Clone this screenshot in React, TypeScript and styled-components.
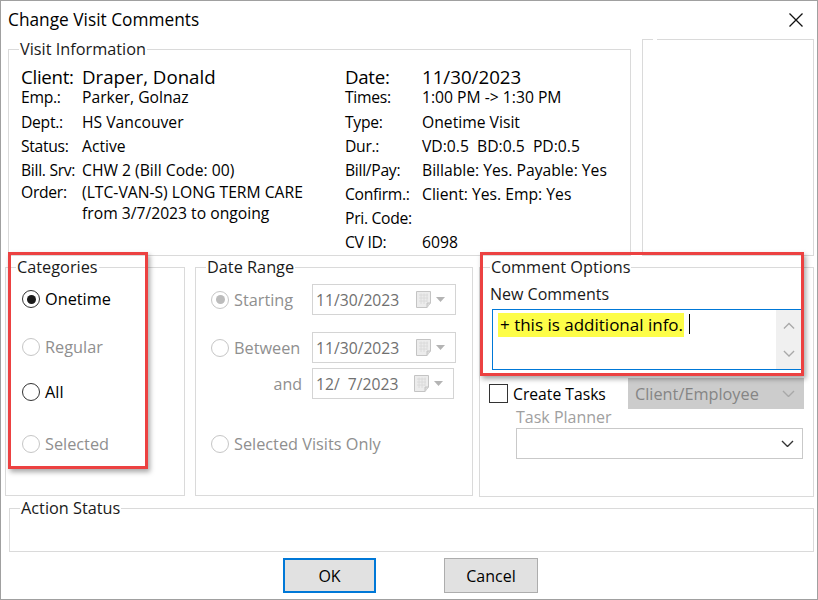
import styled, { createGlobalStyle } from "styled-components";

const GlobalStyle = createGlobalStyle`
  html, body { margin: 0; padding: 0; background: #fff; }
  body { font-family: "Open Sans", "Noto Sans", Arial, sans-serif; color: #000; }
  * { box-sizing: border-box; }
`;

const Window = styled.div`
  position: relative;
  width: 818px;
  height: 600px;
  border: 1px solid #a0a0a0;
  background: #fff;
  display: flex;
  flex-direction: column;
  font-size: 15.7px;
  overflow: hidden;
`;

const TitleBar = styled.div`
  flex: none;
  height: 37px;
  display: flex;
  align-items: center;
  justify-content: space-between;
  padding: 0 14px 0 7px;
`;

const Title = styled.div`
  font-size: 17.3px;
  color: #000;
`;

const Row = styled.div<{ $inset: number; $top: number; $height: number; $gap?: number }>`
  flex: none;
  display: flex;
  align-items: flex-start;
  gap: ${(p) => p.$gap ?? 0}px;
  margin-left: ${(p) => p.$inset}px;
  margin-top: ${(p) => p.$top}px;
  height: ${(p) => p.$height}px;
`;

const Group = styled.fieldset<{ $w: number; $h?: number; $shift?: number }>`
  margin: 0 0 0 ${(p) => p.$shift ?? 0}px;
  padding: 0;
  min-width: 0;
  width: ${(p) => p.$w}px;
  height: ${(p) => (p.$h ? `${p.$h}px` : "100%")};
  border: 1px solid #dadada;
`;

const Caption = styled.legend<{ $pad?: number }>`
  margin-left: 10px;
  padding: 0 ${(p) => p.$pad ?? 1}px;
  font-size: 16.3px;
  line-height: 20px;
  color: #1a1a1a;
  white-space: nowrap;
`;

/* visit information */
const InfoPane = styled.div`
  display: flex;
  padding: 7px 0 0 12px;
`;

const InfoCol = styled.div<{ $w?: number }>`
  display: flex;
  flex-direction: column;
  width: ${(p) => (p.$w ? `${p.$w}px` : "auto")};
`;

const InfoLine = styled.div<{ $kind?: "lead" | "sub" | "wrap" }>`
  display: flex;
  font-size: ${(p) => (p.$kind === "lead" ? "18.7px" : "15.7px")};
  line-height: ${(p) =>
    p.$kind === "lead" ? "22px" : p.$kind === "sub" ? "18px" : p.$kind === "wrap" ? "21px" : "24px"};
  margin-bottom: ${(p) => (p.$kind === "sub" ? 4 : 0)}px;
  white-space: nowrap;
`;

const InfoKey = styled.span<{ $w: number }>`
  flex: none;
  width: ${(p) => p.$w}px;
  letter-spacing: -0.3px;
`;

const InfoVal = styled.span`
  white-space: pre;
`;

/* radios, date pickers */
const Pane = styled.div<{ $left: number; $right?: number }>`
  display: flex;
  flex-direction: column;
  padding-left: ${(p) => p.$left}px;
  padding-right: ${(p) => p.$right ?? 0}px;
`;

const Option = styled.label<{ $top: number; $off?: boolean; $w?: number }>`
  display: flex;
  align-items: center;
  gap: 5px;
  height: 24px;
  margin-top: ${(p) => p.$top}px;
  width: ${(p) => (p.$w ? `${p.$w}px` : "auto")};
  flex: none;
  font-size: 16.3px;
  color: ${(p) => (p.$off ? "#8f8f8f" : "#000")};
  white-space: nowrap;
`;

const Radio = styled.span<{ $on?: boolean; $off?: boolean }>`
  flex: none;
  width: 18px;
  height: 18px;
  border-radius: 50%;
  border: 1px solid ${(p) => (p.$off ? "#c6c6c6" : "#333")};
  background: #fff;
  display: inline-flex;
  align-items: center;
  justify-content: center;
  &::after {
    content: "";
    display: ${(p) => (p.$on ? "block" : "none")};
    width: 9px;
    height: 9px;
    border-radius: 50%;
    background: ${(p) => (p.$off ? "#bcbcbc" : "#1a1a1a")};
  }
`;

const DateRow = styled.div<{ $top: number }>`
  display: flex;
  align-items: center;
  height: 31px;
  margin-top: ${(p) => p.$top}px;
`;

const AndLabel = styled.span`
  width: 101px;
  flex: none;
  text-align: right;
  padding-right: 10px;
  font-size: 16px;
  color: #8f8f8f;
`;

const DateBox = styled.div<{ $w: number }>`
  width: ${(p) => p.$w}px;
  height: 31px;
  border: 1px solid #d4d4d4;
  display: flex;
  align-items: center;
  padding: 0 10px 0 3px;
  font-size: 15.7px;
  color: #707070;
  white-space: pre;
`;

const PickerIcons = styled.span`
  margin-left: auto;
  display: flex;
  align-items: center;
  gap: 4px;
`;

/* comment options */
const FieldLabel = styled.div<{ $top: number; $left?: number; $off?: boolean }>`
  margin-top: ${(p) => p.$top}px;
  margin-left: ${(p) => p.$left ?? 0}px;
  line-height: 20px;
  font-size: 16px;
  color: ${(p) => (p.$off ? "#a0a0a0" : "#1a1a1a")};
`;

const CommentBox = styled.div`
  margin: 5px 0 0 2px;
  height: 61px;
  border: 1px solid #0078d7;
  display: flex;
`;

const CommentText = styled.div`
  flex: 1;
  padding: 3px 0 0 5px;
  display: flex;
  align-items: flex-start;
`;

const Marked = styled.span`
  background: #fdfd48;
  line-height: 24px;
  padding: 0 1px 0 2px;
  font-size: 17px;
  color: #000;
`;

const Caret = styled.span`
  display: inline-block;
  width: 1px;
  height: 20px;
  margin: 1px 0 0 5px;
  background: #000;
`;

const ScrollTrack = styled.div`
  width: 25px;
  background: #f0f0f0;
  display: flex;
  flex-direction: column;
  align-items: center;
  justify-content: space-around;
  padding: 2px 0;
`;

const TaskRow = styled.div`
  display: flex;
  align-items: center;
  height: 31px;
  margin-top: 8px;
  margin-right: -2px;
`;

const CheckBox = styled.span`
  flex: none;
  width: 19px;
  height: 19px;
  border: 1px solid #333;
  margin-left: -1px;
`;

const CheckText = styled.span`
  margin-left: 5px;
  font-size: 15.7px;
  color: #000;
`;

const Select = styled.div<{ $w: number; $off?: boolean; $left?: number; $top?: number }>`
  width: ${(p) => p.$w}px;
  height: 31px;
  margin-left: ${(p) => (p.$left !== undefined ? `${p.$left}px` : "auto")};
  margin-top: ${(p) => p.$top ?? 0}px;
  display: flex;
  align-items: center;
  padding: 0 8px 0 6px;
  border: 1px solid ${(p) => (p.$off ? "#cccccc" : "#c9c9c9")};
  background: ${(p) => (p.$off ? "#cccccc" : "#fff")};
  color: #858585;
  font-size: 16.3px;
  & > svg { margin-left: auto; }
`;

/* footer */
const Buttons = styled.div`
  flex: none;
  display: flex;
  justify-content: center;
  gap: 68px;
  margin-top: 6px;
  padding-left: 3px;
`;

const Button = styled.button<{ $primary?: boolean }>`
  width: ${(p) => (p.$primary ? 93 : 94)}px;
  height: 35px;
  background: #e1e1e1;
  border: ${(p) => (p.$primary ? "2px solid #0078d7" : "1px solid #adadad")};
  font-family: inherit;
  font-size: 16px;
  color: #000;
  padding: 0;
`;

/* red call-out frames drawn over the dialog */
const Callout = styled.div<{ $x: number; $y: number; $w: number; $h: number }>`
  position: absolute;
  left: ${(p) => p.$x}px;
  top: ${(p) => p.$y}px;
  width: ${(p) => p.$w}px;
  height: ${(p) => p.$h}px;
  border: 3px solid #ec4141;
  box-shadow: 2px 3px 5px rgba(0, 0, 0, 0.35);
  pointer-events: none;
`;

const CloseIcon = () => (
  <svg width="14" height="14" viewBox="0 0 14 14">
    <path d="M0.5 0.5 L13.5 13.5 M13.5 0.5 L0.5 13.5" stroke="#111" strokeWidth="1.3" />
  </svg>
);

const CalendarIcon = () => (
  <svg width="16" height="17" viewBox="0 0 16 17">
    <path d="M0.5 0.5 H14.5 V12 L11 16.5 H0.5 Z" fill="#ececec" stroke="#c4c4c4" />
    <path d="M3 4 H12 M3 7 H12 M3 10 H11 M5 2.5 V13 M8 2.5 V13 M11 2.5 V11" stroke="#d8d8d8" strokeWidth="0.8" />
    <path d="M11 16.5 V12 H14.5" fill="#dcdcdc" stroke="#c4c4c4" />
  </svg>
);

const DropTriangle = () => (
  <svg width="9" height="5" viewBox="0 0 9 5">
    <path d="M0 0 H9 L4.5 5 Z" fill="#b4b4b4" />
  </svg>
);

const Chevron = ({ up, color = "#333", w = 13 }: { up?: boolean; color?: string; w?: number }) => (
  <svg width={w} height={w / 2 + 1} viewBox="0 0 13 7.5">
    <path d={up ? "M1 7 L6.5 1.5 L12 7" : "M1 1 L6.5 6.5 L12 1"} fill="none" stroke={color} strokeWidth="1.4" />
  </svg>
);

const DateField = ({ value, w }: { value: string; w: number }) => (
  <DateBox $w={w}>
    {value}
    <PickerIcons>
      <CalendarIcon />
      <DropTriangle />
    </PickerIcons>
  </DateBox>
);

type Kind = "lead" | "sub" | "wrap" | undefined;

const left: [string, string, Kind][] = [
  ["Client:", "Draper, Donald", "lead"],
  ["Emp.:", "Parker, Golnaz", "sub"],
  ["Dept.:", "HS Vancouver", undefined],
  ["Status:", "Active", undefined],
  ["Bill. Srv:", "CHW 2 (Bill Code: 00)", undefined],
  ["Order:", "(LTC-VAN-S) LONG TERM CARE\nfrom 3/7/2023 to ongoing", "wrap"],
];

const right: [string, string, Kind][] = [
  ["Date:", "11/30/2023", "lead"],
  ["Times:", "1:00 PM -> 1:30 PM", "sub"],
  ["Type:", "Onetime Visit", undefined],
  ["Dur.:", "VD:0.5  BD:0.5  PD:0.5", undefined],
  ["Bill/Pay:", "Billable: Yes. Payable: Yes", undefined],
  ["Confirm.:", "Client: Yes. Emp: Yes", undefined],
  ["Pri. Code:", "", undefined],
  ["CV ID:", "6098", undefined],
];

export default function App() {
  return (
    <>
      <GlobalStyle />
      <Window>
        <TitleBar>
          <Title>Change Visit Comments</Title>
          <CloseIcon />
        </TitleBar>

        <Row $inset={7} $top={1} $height={217} $gap={11}>
          <Group $w={623}>
            <Caption>Visit Information</Caption>
            <InfoPane>
              <InfoCol $w={324}>
                {left.map(([k, v, kind]) => (
                  <InfoLine key={k} $kind={kind}>
                    <InfoKey $w={61}>{k}</InfoKey>
                    <InfoVal>{v}</InfoVal>
                  </InfoLine>
                ))}
              </InfoCol>
              <InfoCol>
                {right.map(([k, v, kind]) => (
                  <InfoLine key={k} $kind={kind}>
                    <InfoKey $w={77}>{k}</InfoKey>
                    <InfoVal>{v}</InfoVal>
                  </InfoLine>
                ))}
              </InfoCol>
            </InfoPane>
          </Group>
          <Group $w={172}>
            <Caption $pad={2} />
          </Group>
        </Row>

        <Row $inset={4} $top={1} $height={240}>
          <Group $w={180} $h={239}>
            <Caption>Categories</Caption>
            <Pane $left={16}>
              <Option $top={10}>
                <Radio $on />
                Onetime
              </Option>
              <Option $top={24} $off>
                <Radio $off />
                Regular
              </Option>
              <Option $top={21}>
                <Radio />
                All
              </Option>
              <Option $top={28} $off>
                <Radio $off />
                Selected
              </Option>
            </Pane>
          </Group>

          <Group $w={278} $h={239} $shift={10}>
            <Caption>Date Range</Caption>
            <Pane $left={15}>
              <DateRow $top={7}>
                <Option $top={0} $off $w={101}>
                  <Radio $on $off />
                  Starting
                </Option>
                <DateField value="11/30/2023" w={144} />
              </DateRow>
              <DateRow $top={17}>
                <Option $top={0} $off $w={101}>
                  <Radio $off />
                  Between
                </Option>
                <DateField value="11/30/2023" w={144} />
              </DateRow>
              <DateRow $top={5}>
                <AndLabel>and</AndLabel>
                <DateField value="12/  7/2023" w={142} />
              </DateRow>
              <Option $top={33} $off>
                <Radio $off />
                Selected Visits Only
              </Option>
            </Pane>
          </Group>

          <Group $w={335} $h={240} $shift={6}>
            <Caption>Comment Options</Caption>
            <Pane $left={10} $right={11}>
              <FieldLabel $top={7}>New Comments</FieldLabel>
              <CommentBox>
                <CommentText>
                  <Marked>+ this is additional info.</Marked>
                  <Caret />
                </CommentText>
                <ScrollTrack>
                  <Chevron up color="#a9a9a9" w={12} />
                  <Chevron color="#a9a9a9" w={12} />
                </ScrollTrack>
              </CommentBox>
              <TaskRow>
                <CheckBox />
                <CheckText>Create Tasks</CheckText>
                <Select $w={176} $off>
                  Client/Employee
                  <Chevron color="#a8a8a8" />
                </Select>
              </TaskRow>
              <FieldLabel $top={-2} $left={26} $off>
                Task Planner
              </FieldLabel>
              <Select $w={287} $left={26} $top={1}>
                <Chevron color="#333" />
              </Select>
            </Pane>
          </Group>
        </Row>

        <Row $inset={8} $top={1} $height={54}>
          <Group $w={805}>
            <Caption>Action Status</Caption>
          </Group>
        </Row>

        <Buttons>
          <Button $primary>OK</Button>
          <Button>Cancel</Button>
        </Buttons>

        <Callout $x={7} $y={251} $w={140} $h={217} />
        <Callout $x={479} $y={251} $w={324} $h={124} />
      </Window>
    </>
  );
}
